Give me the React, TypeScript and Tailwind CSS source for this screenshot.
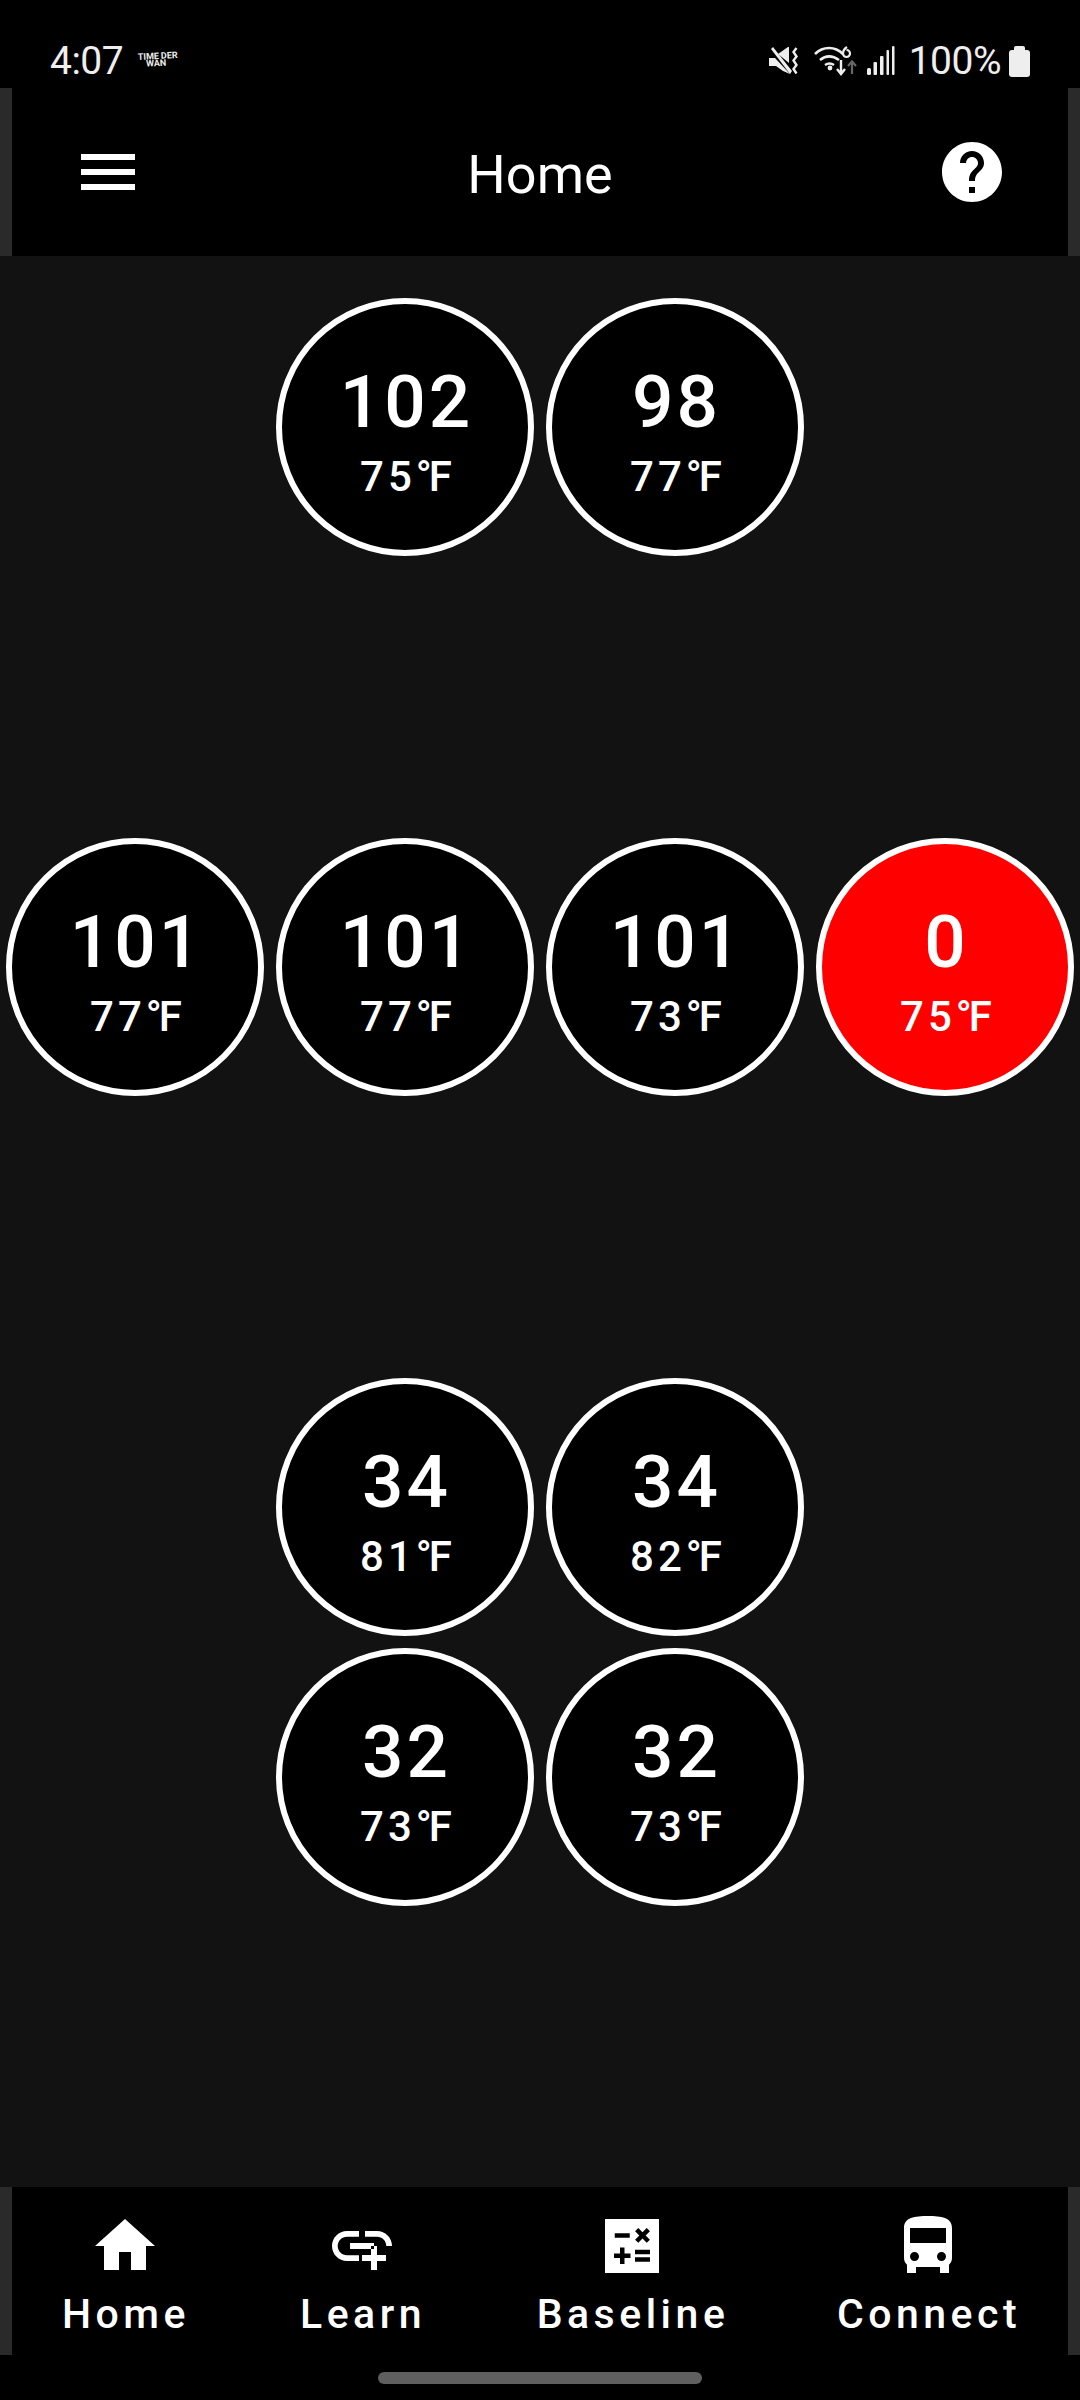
const font = { fontFamily: 'Roboto, sans-serif' };

type C = { v: string; t: string; red?: boolean } | null;
const rows: C[][] = [
  [null, { v: '102', t: '75' }, { v: '98', t: '77' }, null],
  [null, null, null, null],
  [{ v: '101', t: '77' }, { v: '101', t: '77' }, { v: '101', t: '73' }, { v: '0', t: '75', red: true }],
  [null, null, null, null],
  [null, { v: '34', t: '81' }, { v: '34', t: '82' }, null],
  [null, { v: '32', t: '73' }, { v: '32', t: '73' }, null],
];

function Circle({ v, t, red }: { v: string; t: string; red?: boolean }) {
  return (
    <div className={`w-[258px] h-[258px] shrink-0 rounded-full border-[6px] border-white flex flex-col items-center text-white ${red ? 'bg-[#ff0000]' : 'bg-black'}`}>
      <div className="mt-[56px] pl-[3px] text-[73px] leading-[84px] font-medium tracking-[3px]">{v}</div>
      <div className="mt-[8px] pl-[2px] text-[42px] leading-[50px] font-medium flex items-baseline">
        <span className="tracking-[4px]">{t}</span>
        <span className="tracking-[-3px] pr-[3px]">°F</span>
      </div>
    </div>
  );
}

const nav = [
  { label: 'Home', w: 'w-[226px]', d: 'M10 20v-6h4v6h5v-8h3L12 3 2 12h3v8z' },
  { label: 'Learn', w: 'w-[248px]', d: 'M8 11h8v2H8zm12.1 1H22c0-2.76-2.24-5-5-5h-4v1.9h4c1.71 0 3.1 1.39 3.1 3.1zM3.9 12c0-1.71 1.39-3.1 3.1-3.1h4V7H7c-2.76 0-5 2.24-5 5s2.24 5 5 5h4v-1.9H7c-1.71 0-3.1-1.39-3.1-3.1zM17 12h-2v3h-3v2h3v3h2v-3h3v-2h-3z' },
  { label: 'Baseline', w: 'w-[292px]', d: 'M3 3v18h18V3H3zm10.03 4.06L14.09 6l1.41 1.41L16.91 6l1.06 1.06-1.41 1.41 1.41 1.41-1.06 1.06-1.41-1.4-1.41 1.41-1.06-1.06 1.41-1.41-1.41-1.42zM6.25 7.72h5v1.5h-5v-1.5zM11.5 16h-2v2H8v-2H6v-1.5h2v-2h1.5v2h2V16zm6.5 1.25h-5v-1.5h5v1.5zm0-2.5h-5v-1.5h5v1.5z' },
  { label: 'Connect', w: 'w-[280px] ml-[10px]', d: 'M4 16c0 .88.39 1.67 1 2.22V21h3v-2h8v2h3v-2.78c.61-.55 1-1.34 1-2.22V6c0-3.5-3.58-4-8-4s-8 .5-8 4v10zm3.5 1c-.83 0-1.5-.67-1.5-1.5S6.67 14 7.5 14s1.5.67 1.5 1.5S8.33 17 7.5 17zm9 0c-.83 0-1.5-.67-1.5-1.5s.67-1.5 1.5-1.5 1.5.67 1.5 1.500-.67 1.500-1.500 1.500zm1.500-6H6V6h12v5z' },
];

export default function App() {
  return (
    <div className="w-[1080px] h-[2400px] bg-black flex flex-col overflow-hidden" style={font}>
      <div className="h-[88px] flex items-center pl-[50px] pr-[50px] text-[#eeeeee] pt-[34px]">
        <span className="text-[39px] leading-[48px] tracking-[-0.5px]">4:07</span>
        <div className="ml-[15px] text-[9px] leading-[7px] font-bold w-[40px] mt-[-2px] -rotate-3">
          <div>TIME<span className="ml-[2px]">DER</span></div>
          <div className="pl-[8px]">WAN</div>
        </div>
        <div className="ml-auto flex items-center">
          <svg width="30" height="28" viewBox="0 0 30 28" fill="#eeeeee" className="mr-[15px]">
            <path d="M0 11h6L21 27l-7-3-7-5H0z" />
            <path d="M2 2l2-2 19 24-2 3z" />
            <path d="M9 7l10-7h1v16z" />
            <path d="M27.500 1l-3 4 3 4.500-3 4 3 4.500-3 4 3 4.500" fill="none" stroke="#eeeeee" strokeWidth="2.400" />
          </svg>
          <svg width="44" height="30" viewBox="0 0 44 30" className="mr-[9px]">
            <path d="M1 8c8-8 20-8 28 0M6 14c6-5 12-5 19 0M11 19c3-2 6-2 9 0" fill="none" stroke="#eeeeee" strokeWidth="2.600" />
            <circle cx="16" cy="22" r="2.400" fill="#eeeeee" />
            <path d="M33 1c-3 2-4 4-4 6.500a3.500 3.500 0 1 0 3.500-3.500" fill="none" stroke="#eeeeee" strokeWidth="2.200" />
            <path d="M27 14v14M23 23l4 5 4-5" fill="none" stroke="#eeeeee" strokeWidth="2.400" />
            <path d="M38 28v-12M34 20l4-4.500 4 4.500" fill="none" stroke="#666666" strokeWidth="2.200" />
          </svg>
          <svg width="28" height="30" viewBox="0 0 28 30" fill="#eeeeee" className="mr-[14px]">
            <rect x="0" y="22" width="4" height="7" rx="1.500" />
            <rect x="6.500" y="16" width="3.500" height="13" rx="1" />
            <rect x="13" y="10" width="3.500" height="19" rx="1" />
            <rect x="19.500" y="4" width="2.500" height="25" rx="1" />
            <rect x="25" y="0" width="2.500" height="29" rx="1" />
          </svg>
          <span className="text-[39px] leading-[48px] tracking-[-0.5px]">100%</span>
          <div className="ml-[8px] flex flex-col items-center">
            <div className="w-[11px] h-[4px] bg-[#eeeeee] rounded-t-[2px]" />
            <div className="w-[21px] h-[27px] bg-[#eeeeee] rounded-[3px]" />
          </div>
        </div>
      </div>

      <div className="h-[168px] flex bg-[#2a2a2a]">
        <div className="mx-[12px] flex-1 bg-black flex items-center justify-between text-white relative">
          <div className="ml-[69px] flex flex-col gap-[9px]">
            <div className="w-[54px] h-[6px] bg-white" />
            <div className="w-[54px] h-[6px] bg-white" />
            <div className="w-[54px] h-[6px] bg-white" />
          </div>
          <div className="absolute inset-x-0 top-[55px] text-center text-[54px] leading-[64px]">Home</div>
          <svg width="72" height="72" viewBox="0 0 24 24" fill="#ffffff" className="mr-[60px]">
            <path d="M12 2C6.480 2 2 6.480 2 12s4.480 10 10 10 10-4.480 10-10S17.520 2 12 2zm1 17h-2v-2h2v2zm2.070-7.750l-.900.920C13.450 12.900 13 13.500 13 15h-2v-.500c0-1.100.450-2.100 1.170-2.830l1.240-1.260c.370-.360.590-.860.590-1.410 0-1.100-.900-2-2-2s-2 .900-2 2H8c0-2.210 1.790-4 4-4s4 1.790 4 4c0 .880-.360 1.680-.930 2.250z" />
          </svg>
        </div>
      </div>

      <div className="h-[1931px] bg-[#121212] pt-[36px] grid grid-cols-4 auto-rows-[270px]">
        {rows.flat().map((c, i) => (
          <div key={i} className="flex items-center justify-center">
            {c && <Circle {...c} />}
          </div>
        ))}
      </div>

      <div className="h-[168px] flex bg-[#2a2a2a]">
        <div className="mx-[12px] flex-1 bg-black flex text-white">
          {nav.map((n) => (
            <div key={n.label} className={`${n.w} flex flex-col items-center pt-[23px]`}>
              <svg width="72" height="72" viewBox="0 0 24 24" fill="#ffffff"><path d={n.d} /></svg>
              <div className="text-[41px] leading-[48px] pl-[2px] font-medium tracking-[4.5px] mt-[8px]">{n.label}</div>
            </div>
          ))}
        </div>
      </div>

      <div className="flex-1 flex justify-center pt-[17px]">
        <div className="w-[324px] h-[12px] rounded-full bg-[#5f5f5f]" />
      </div>
    </div>
  );
}
